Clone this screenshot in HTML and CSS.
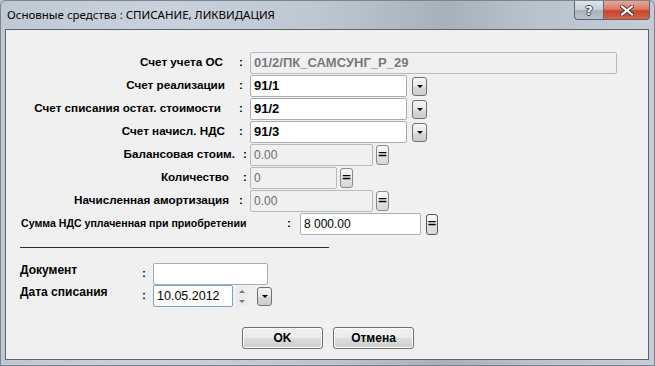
FILE: index.html
```html
<!DOCTYPE html>
<html>
<head>
<meta charset="utf-8">
<link rel="stylesheet" href="styles.css">
</head>
<body>
<div class="window">
  <div class="titlebar">
    <div class="title">Основные средства : СПИСАНИЕ, ЛИКВИДАЦИЯ</div>
    <div class="tbtns">
      <div class="tbtn help">?</div>
      <div class="tbtn close">
        <svg width="14" height="11" viewBox="0 0 14 11"><path d="M2 1.5 L12 9.5 M12 1.5 L2 9.5" stroke="#3b3b3b" stroke-width="4" stroke-linecap="square"/><path d="M2 1.5 L12 9.5 M12 1.5 L2 9.5" stroke="#ffffff" stroke-width="2" stroke-linecap="square"/></svg>
      </div>
    </div>
  </div>
  <div class="client">
    <div class="form">
      <div class="row">
        <div class="lbl"><span class="t m16">Счет учета ОС</span><span class="c">:</span></div>
        <div class="inp dis wide">01/2/ПК_САМСУНГ_Р_29</div>
      </div>
      <div class="row">
        <div class="lbl"><span class="t m14">Счет реализации</span><span class="c">:</span></div>
        <div class="inp val">91/1</div><div class="ddbtn"><span class="tri"></span></div>
      </div>
      <div class="row">
        <div class="lbl"><span class="t m18">Счет списания остат. стоимости</span><span class="c">:</span></div>
        <div class="inp val">91/2</div><div class="ddbtn"><span class="tri"></span></div>
      </div>
      <div class="row">
        <div class="lbl"><span class="t m14">Счет начисл. НДС</span><span class="c">:</span></div>
        <div class="inp val">91/3</div><div class="ddbtn"><span class="tri"></span></div>
      </div>
      <div class="row">
        <div class="lbl"><span class="t m8">Балансовая стоим.</span><span class="c c2">:</span></div>
        <div class="inp dis num mid">0.00</div><div class="eqbtn">=</div>
      </div>
      <div class="row">
        <div class="lbl"><span class="t m14">Количество</span><span class="c c2">:</span></div>
        <div class="inp dis num short">0</div><div class="eqbtn">=</div>
      </div>
      <div class="row">
        <div class="lbl"><span class="t m10">Начисленная амортизация</span><span class="c">:</span></div>
        <div class="inp dis num mid">0.00</div><div class="eqbtn">=</div>
      </div>
      <div class="row">
        <div class="lbl8">Сумма НДС уплаченная при приобретении</div><div class="colon8">:</div>
        <div class="inp val8">8 000.00</div><div class="eqbtn act">=</div>
      </div>
    </div>
    <div class="sep"></div>
    <div class="doc">
      <div class="drow">
        <div class="dlbl">Документ</div><div class="dcolon">:</div>
        <div class="inp docin"></div>
      </div>
      <div class="drow">
        <div class="dlbl">Дата списания</div><div class="dcolon">:</div>
        <div class="inp datein">10.05.2012</div>
        <div class="spin"><span class="up"></span><span class="dn"></span></div>
        <div class="ddbtn dd2"><span class="tri"></span></div>
      </div>
    </div>
    <div class="actions">
      <div class="btn">OK</div>
      <div class="btn">Отмена</div>
    </div>
  </div>
</div>
</body>
</html>
```
FILE: styles.css
```css
* { box-sizing: border-box; }
html, body { margin: 0; padding: 0; }
body { width: 655px; height: 366px; overflow: hidden; background: #b8c3cf; }
.window {
  width: 655px; height: 366px;
  display: flex; flex-direction: column;
  background: linear-gradient(90deg, #bfc9d4 0%, #c9d2dc 25%, #bcc6d1 50%, #a7b1bc 68%, #b9c3ce 82%, #c4cdd7 100%);
  border: 1px solid #7b8591;
  border-radius: 6px 6px 0 0;
}
.titlebar { height: 28px; display: flex; justify-content: space-between; align-items: flex-start; }
.title {
  font-family: "Noto Sans", sans-serif; font-size: 11.5px; color: #000;
  padding: 6px 0 0 6px; line-height: 16px;
}
.tbtns { display: flex; margin-right: 4px; }
.tbtn {
  height: 19px; border: 1px solid #5d6670; border-top: none;
  display: flex; align-items: center; justify-content: center;
}
.help {
  width: 29px; border-radius: 0 0 0 4px; border-right: none;
  background: linear-gradient(180deg, #dfe4ea 0%, #c8cfd7 48%, #aab3bd 52%, #b9c1ca 100%);
  font-family: "DejaVu Sans", sans-serif; font-weight: bold; font-size: 13px; color: #fff;
  text-shadow: 1px 0 0 #3d444c, -1px 0 0 #3d444c, 0 1px 0 #3d444c, 0 -1px 0 #3d444c;
}
.close {
  width: 47px; border-radius: 0 0 4px 0;
  background: linear-gradient(180deg, #e9a595 0%, #dc7c66 45%, #c8432a 55%, #d4654a 100%);
}
.client {
  flex: 1; margin: 0 5px 5px 4px;
  background: #f0f0f0; border: 1px solid #5f6368;
  display: flex; flex-direction: column;
  font-family: "Liberation Sans", Arial, sans-serif; font-size: 11.7px; font-weight: bold; color: #000;
}
.form { padding-top: 22px; display: flex; flex-direction: column; }
.row { height: 23px; display: flex; align-items: flex-start; }
.lbl { width: 244px; display: flex; justify-content: flex-end; line-height: 20px; white-space: nowrap; }
.c { width: 11px; }
.c.c2 { width: 7px; }
.m8 { margin-right: 8px; }
.m10 { margin-right: 10px; }
.m14 { margin-right: 14px; }
.m16 { margin-right: 16px; }
.m18 { margin-right: 18px; }
.inp {
  height: 22px; border: 1px solid #abadb3; background: #fff; border-radius: 2px;
  font-size: 13px; line-height: 20px; padding-left: 3px; white-space: nowrap;
}
.dis { background: #f0f0f0; border-color: #b6b9bd; color: #7a7a7a; }
.num { font-weight: normal; font-size: 12px; color: #6d6d6d; }
.wide { width: 367px; }
.mid { width: 123px; }
.short { width: 87px; }
.val { width: 157px; }
.ddbtn {
  width: 15px; height: 19px; margin: 2px 0 0 5px;
  border: 1px solid #707070; border-radius: 3px;
  background: linear-gradient(180deg, #f4f4f4 0%, #e8e8e8 50%, #d8d8d8 51%, #cdcdcd 100%);
  display: flex; align-items: center; justify-content: center;
}
.tri { width: 0; height: 0; border-left: 3px solid transparent; border-right: 3px solid transparent; border-top: 3px solid #000; }
.eqbtn {
  width: 13px; height: 20px; margin: 1px 0 0 3px;
  border: 1px solid #8a8a8a; border-radius: 3px;
  background: linear-gradient(180deg, #f6f6f6 0%, #ececec 50%, #e0e0e0 51%, #d9d9d9 100%);
  font-size: 12px; line-height: 17px; text-align: center; font-family: "DejaVu Sans", sans-serif; font-weight: bold;
}
.eqbtn.act { height: 21px; margin-left: 5px; border-color: #555; width: 12px; }
.lbl8 { padding-left: 15px; width: 281px; line-height: 20px; white-space: nowrap; font-size: 10.6px; }
.colon8 { width: 13px; line-height: 20px; }
.val8 { width: 121px; font-weight: normal; font-size: 12px; color: #000; }
.sep { margin: 11px 0 0 14px; width: 309px; height: 1px; background: #2b2b2b; }
.doc { padding-top: 15px; display: flex; flex-direction: column; }
.drow { height: 22px; display: flex; align-items: flex-start; }
.dlbl { width: 136px; padding-left: 14px; line-height: 14px; font-size: 12px; }
.dcolon { width: 11px; line-height: 20px; }
.docin { width: 115px; height: 22px; font-weight: normal; }
.datein { width: 80px; font-weight: normal; border-color: #7ba2c9; font-size: 12.5px; }
.spin { width: 12px; margin: 2px 0 0 3px; height: 19px; display: flex; flex-direction: column; align-items: center; justify-content: space-around; background: #ececec; }
.up { width: 0; height: 0; border-left: 3px solid transparent; border-right: 3px solid transparent; border-bottom: 3px solid #777; }
.dn { width: 0; height: 0; border-left: 3px solid transparent; border-right: 3px solid transparent; border-top: 3px solid #777; }
.dd2 { margin-left: 9px; }
.actions { display: flex; gap: 10px; padding: 20px 0 0 236px; }
.btn {
  width: 81px; height: 22px; border: 1px solid #707070; border-radius: 3px;
  background: linear-gradient(180deg, #f2f2f2 0%, #ebebeb 50%, #dddddd 51%, #cfcfcf 100%);
  text-align: center; line-height: 20px; font-size: 12px;
  box-shadow: inset 0 0 0 1px #fcfcfc;
}
```
